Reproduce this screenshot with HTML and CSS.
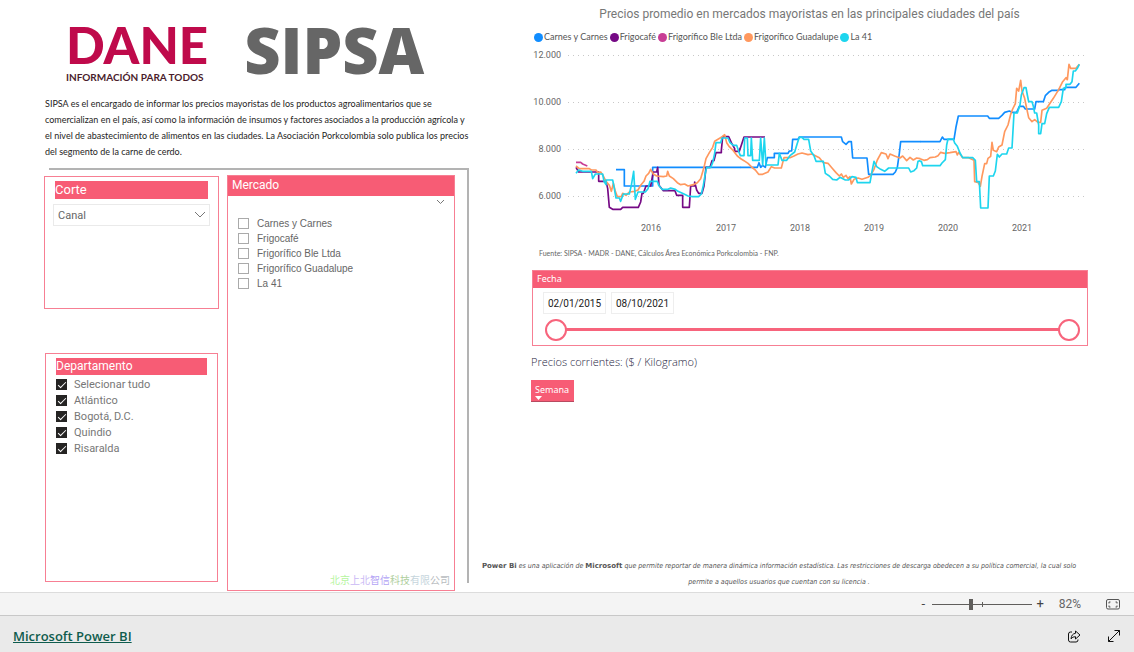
FILE: index.html
```html
<!DOCTYPE html>
<html lang="es">
<head>
<meta charset="utf-8">
<title>Microsoft Power BI</title>
<link rel="stylesheet" href="styles.css">
</head>
<body>
<main class="report">
  <section class="left">
    <header class="intro">
      <div class="logos">
        <div class="dane"><span class="dane-name">DANE</span><span class="dane-tag">INFORMACIÓN PARA TODOS</span></div>
        <div class="sipsa">SIPSA</div>
      </div>
      <p class="about">SIPSA es el encargado de informar los precios mayoristas de los productos agroalimentarios que se comercializan en el país, así como la información de insumos y factores asociados a la producción agrícola y el nivel de abastecimiento de alimentos en las ciudades. La Asociación Porkcolombia solo publica los precios del segmento de la carne de cerdo.</p>
    </header>
    <div class="filters">
      <div class="stack">
        <section class="panel corte">
          <h2 class="panel-head"><label for="corte">Corte</label></h2>
          <div class="select-wrap">
            <select id="corte" class="select"><option>Canal</option></select>
            <svg class="select-arrow" viewBox="0 0 12 7" width="12" height="7"><path d="M1 1l5 5 5-5"/></svg>
          </div>
        </section>
        <section class="panel departamento">
          <h2 class="panel-head">Departamento</h2>
          <label class="check dark"><input type="checkbox" checked>Selecionar tudo</label>
          <label class="check dark"><input type="checkbox" checked>Atlántico</label>
          <label class="check dark"><input type="checkbox" checked>Bogotá, D.C.</label>
          <label class="check dark"><input type="checkbox" checked>Quindio</label>
          <label class="check dark"><input type="checkbox" checked>Risaralda</label>
        </section>
      </div>
      <section class="panel mercado">
        <h2 class="mercado-head">Mercado</h2>
        <button class="more" aria-label="Opciones"><svg viewBox="0 0 9 6" width="9" height="6"><path d="M1 1l3.500 3.500L8 1"/></svg></button>
        <label class="check light"><input type="checkbox">Carnes y Carnes</label>
        <label class="check light"><input type="checkbox">Frigocafé</label>
        <label class="check light"><input type="checkbox">Frigorífico Ble Ltda</label>
        <label class="check light"><input type="checkbox">Frigorífico Guadalupe</label>
        <label class="check light"><input type="checkbox">La 41</label>
        <p class="vendor"><span class="v1">北京</span><span class="v2">上北</span><span class="v3">智信</span><span class="v4">科技</span><span class="v5">有限</span><span class="v6">公司</span></p>
      </section>
    </div>
  </section>

  <section class="right">
    <h1 class="chart-title">Precios promedio en mercados mayoristas en las principales ciudades del país</h1>
    <ul class="legend">
      <li><i class="dot c-blue"></i>Carnes y Carnes</li>
      <li><i class="dot c-purple"></i>Frigocafé</li>
      <li><i class="dot c-pink"></i>Frigorífico Ble Ltda</li>
      <li><i class="dot c-orange"></i>Frigorífico Guadalupe</li>
      <li><i class="dot c-cyan"></i>La 41</li>
    </ul>
    <svg class="chart" viewBox="531 46 557 190" role="img" aria-label="Precios por mercado, 2015 a 2021">
      <g class="grid"><path d="M568 55.500H1088M568 102.500H1088M568 149.500H1088M568 196.500H1088"/></g>
      <g class="axis y"><text x="561" y="58">12.000</text><text x="561" y="105">10.000</text><text x="561" y="152">8.000</text><text x="561" y="199">6.000</text></g>
      <g class="axis x"><text x="651" y="231">2016</text><text x="726" y="231">2017</text><text x="800" y="231">2018</text><text x="874" y="231">2019</text><text x="948" y="231">2020</text><text x="1022" y="231">2021</text></g>
      <g class="lines" transform="translate(560 120) scale(.33333)">
        <path class="s-blue" d="M168 149H193V198H278V142H541"/>
        <path class="s-purple" d="M48 142L56 156H116V184H138L143 205 148 262 158 268H182L188 262H235L242 246 246 220H250L258 198H272L280 156H290L293 142 297 196 310 212H345L350 226H368V262H388L392 198H404V186L410 210 416 220H426L432 198 438 142H450L456 122H462L468 98H484V92L488 50H506L514 68 524 86V94H538L541 84"/>
        <path class="s-pink" d="M48 127H62L68 132 82 138"/>
        <path class="s-orange" d="M48 138L58 146H88L94 150H108L114 158 122 156 130 168 138 184 148 196 154 214 160 190 166 214 172 230H184L188 220 198 226 208 216 224 214 234 210 242 196 252 184 258 168 266 160 272 148 280 162 290 168 310 170 320 168 323 154 328 168 340 176 352 188 362 194 374 192 384 198 400 194 412 188 422 176 432 142 438 116 448 98 458 82 464 64 474 58 484 52 494 44 500 68 508 80 520 92 532 108 541 115"/>
        <path class="s-cyan" d="M48 160L56 150 68 154H94L98 176 106 162H128L132 184 138 194V180H158L162 200 168 234H178L182 244 190 222H208L214 196 221 154 226 238 234 216H256L264 206 270 184H292L296 196 306 208H324L332 204 346 208 354 214 372 222 384 228 398 230H416L424 222 430 196 436 160 440 142H452L458 128 464 100 468 68H482L486 54H504L510 68 520 76H530L536 94 541 107"/>
      </g>
      <g class="lines" transform="translate(740 50) scale(.33333)">
        <path class="s-blue" d="M0 352H52L57 338 62 352 68 346 76 352 82 323H103V310H144L148 303H155L158 268H174L178 261H304L308 275 318 283 326 275H334L338 324H381L386 373H459L466 366 472 352 478 310 482 275H541"/>
        <path class="s-purple" d="M0 298L12 261H75"/>
        <path class="s-orange" d="M0 325L12 332 24 340 36 352 46 360 56 373H68L84 366 94 350 104 354H124L132 323H150L162 318 174 312 186 309 204 314 216 312 226 317 238 323 250 338 264 340 276 354 288 368 298 378 304 372 310 382 318 376 324 386 330 380 334 402 342 388 354 384 366 388 384 382 392 376 402 358 412 330 424 308 438 312 444 326 450 312 464 318 480 324 488 318 500 332 510 322 520 330 530 324 541 326"/>
        <path class="s-cyan" d="M0 317H12L14 264H22L24 317H32L34 264 38 331H58L62 264 68 345 73 264 78 345H114L118 310 126 331H140L150 317 164 306 172 280 178 262H186L192 268H206L212 303 222 317 228 334H250L256 370 268 378 278 388 290 390 300 382 316 390H326L336 380 348 382 352 398H390L396 364 402 334 410 350 422 358 434 364 446 354H506L512 366 522 362 530 354 534 334 541 332"/>
      </g>
      <g class="lines" transform="translate(910 45) scale(.33333)">
        <path class="s-blue" d="M30 290H90L97 276 102 283H132L138 246 145 213H233L238 220H266L276 211 284 202 298 198 306 202H320L328 184H340L346 192H374L378 170H400L406 152 416 142 426 136H446V134H464L466 127H498L508 115"/>
        <path class="s-orange" d="M30 341L42 346 52 344 60 338 76 336 84 332 92 322 104 325 120 323 138 320 142 330 146 322 158 338 176 338 192 346 194 410 204 412 211 424 216 394 224 356H230L234 340 242 334 246 292 250 316 260 320 266 306 276 300 284 260 294 240 302 208 308 192 316 176 320 130 326 138 332 106 336 138 344 160 350 190 356 218 366 230 374 224 384 232H392L396 196 410 190 430 160 446 134 458 110 468 98 472 104 477 58 482 70H498L508 58"/>
        <path class="s-cyan" d="M30 349H34L38 362H90L96 354 106 344 110 300 114 282H130L134 294 142 304 150 324 158 338H188L196 346 200 410H208L212 489H234L238 393H250L256 378 262 328 268 336 276 327H290L296 309H306L312 204H322L330 180 334 150 342 128H348L352 150 356 170H366L370 184 374 204H380L386 240V266H392L396 236H404L410 206 418 187H446L454 170 460 130 468 128V118H480L486 110 490 78H496L502 70 508 58"/>
      </g>
    </svg>
    <p class="source">Fuente: SIPSA - MADR - DANE, Cálculos Área Económica Porkcolombia - FNP.</p>
    <section class="fecha">
      <h2 class="fecha-head">Fecha</h2>
      <div class="dates">
        <input class="date" type="text" value="02/01/2015" aria-label="Desde">
        <input class="date" type="text" value="08/10/2021" aria-label="Hasta">
      </div>
      <div class="range">
        <input type="range" min="0" max="100" value="0" aria-label="Inicio">
        <input type="range" min="0" max="100" value="100" aria-label="Fin">
      </div>
    </section>
    <h2 class="prices">Precios corrientes: ($ / Kilogramo)</h2>
    <table class="table"><thead><tr><th><button class="sort">Semana<svg viewBox="0 0 7 4" width="7" height="4"><path d="M0 0h7L3.500 4z"/></svg></button></th></tr></thead></table>
    <p class="note"><b>Power Bi</b> es una aplicación de <b>Microsoft</b> que permite reportar de manera dinámica información estadística. Las restricciones de descarga obedecen a su política comercial, la cual solo permite a aquellos usuarios que cuentan con su licencia .</p>
  </section>
</main>
<div class="zoombar">
  <button class="zoom-btn">-</button>
  <div class="zoom-range"><i class="tick"></i><input type="range" min="0" max="100" value="39" aria-label="Zoom"></div>
  <button class="zoom-btn">+</button>
  <span class="percent">82%</span>
  <button class="icon-btn" aria-label="Ajustar a la página"><svg class="fit" viewBox="0 0 15 11" width="15" height="11"><rect x=".5" y=".5" width="13" height="9.500" rx="1.500"/><path d="M3 4.500V3h1.500M3 6.500V8h1.500M11 4.500V3H9.500M11 6.500V8H9.500"/></svg></button>
</div>
<footer class="bottom">
  <a class="brand" href="#">Microsoft Power BI</a>
  <button class="icon-btn" aria-label="Compartir"><svg class="ico" viewBox="0 0 14 13" width="14" height="13"><path d="M5 2H3.500Q1.500 2 1.500 4v6q0 2 2 2h5.500q2 0 2-2V9.500M8.500 1l4.500 4-4.500 4V6.700Q5.500 6.500 4 8.800 4.500 3.800 8.500 3.300z"/></svg></button>
  <button class="icon-btn" aria-label="Pantalla completa"><svg class="ico" viewBox="0 0 14 14" width="14" height="14"><path d="M1.500 12.500l11-11M7.500 1.500h5v5M1.500 7.500v5h5"/></svg></button>
</footer>
</body>
</html>
```
FILE: styles.css
```css
* { box-sizing: border-box; }
body { margin: 0; min-height: 100vh; display: flex; flex-direction: column; background: #fff; font-family: Roboto, "Noto Sans", sans-serif; color: #666; }
h1, h2, p, ul { margin: 0; padding: 0; font-weight: 400; }
button { border: 0; padding: 0; background: none; font: inherit; color: inherit; }
svg { display: block; }

.report { flex: 1; display: grid; grid-template-columns: 470fr 664fr; }
.left { display: flex; flex-direction: column; padding-left: 44px; }
.intro { height: 168px; padding-top: 16px; }
.logos { display: flex; gap: 36px; height: 80px; padding-left: 22px; }
.dane { display: flex; flex-direction: column; padding-top: 2px; }
.dane-name { font: 900 51px/54px Lato, sans-serif; color: #bf0a4b; }
.dane-tag { font: 700 10px/10px Lato, sans-serif; color: #4a1c2c; white-space: nowrap; }
.sipsa { font: 800 63px/68px "Open Sans", sans-serif; color: #666; }
.about { padding-left: 1px; font: 9px/16px Lato, sans-serif; color: #252423; }

.filters { flex: 1; display: grid; grid-template-columns: 175fr 228fr; gap: 8px; margin-right: 1px; padding: 7px 14px 1px 0; position: relative; }
.filters::before { content: ""; position: absolute; left: 5px; right: 0; top: 0; bottom: 9px; border-top: 2px solid #b3b3b3; border-right: 2px solid #b3b3b3; pointer-events: none; }
.stack { display: flex; flex-direction: column; gap: 44px; padding: 1px 0 9px; }
.panel { border: 1px solid #f77f93; background: #fff; position: relative; }
.corte { height: 133px; padding: 4px 8px; }
.departamento { flex: 1; margin: 0 1px; padding: 4px 10px; }
.panel-head { margin: 0 2px; background: #f75c75; color: #fff; font-size: 13px; line-height: 18px; }
.departamento .panel-head { margin: 0 0 1px; font-size: 12px; line-height: 17px; }
.select-wrap { position: relative; margin-top: 5px; }
.select { appearance: none; display: block; width: 100%; height: 22px; padding: 0 4px; border: 1px solid #eaeaea; border-radius: 0; background: #fff; color: #666; font: 11px Roboto, sans-serif; }
.select-arrow { position: absolute; right: 4px; top: 7px; fill: none; stroke: #777; }
.check { display: flex; align-items: center; }
.check input { appearance: none; flex: none; width: 11px; height: 11px; margin: 0; }
.dark { height: 16px; gap: 7px; font-size: 11px; color: #777; }
.dark input { background: #252423; }
.dark input::before { content: ""; display: block; width: 7px; height: 3px; margin: 3px 2px; border-left: 1px solid #fff; border-bottom: 1px solid #fff; transform: rotate(-45deg); }
.light { height: 15px; gap: 8px; padding-left: 10px; font: 10px "Liberation Sans", sans-serif; color: #666; }
.light input { border: 1px solid #aaa; }
.mercado { display: flex; flex-direction: column; }
.mercado-head { height: 20px; padding-left: 4px; background: #f75c75; color: #fff; font-size: 12px; line-height: 18px; }
.more { align-self: flex-end; height: 11px; margin: 0 9px 9px; }
.more path { fill: none; stroke: #777; }
.vendor { margin: auto 4px 4px; text-align: right; font: 10px/12px "Noto Sans CJK SC", sans-serif; }
.v1 { color: #b5f5a0; } .v2 { color: #c9b8f5; } .v3 { color: #b3a4f5; } .v4 { color: #b0cfa0; } .v5 { color: #c5d5dc; } .v6 { color: #b8bcc0; }

.right { display: flex; flex-direction: column; padding: 5px 46px 2px 61px; }
.chart-title { text-align: center; font-size: 12px; line-height: 18px; color: #777; }
.legend { display: flex; gap: 2px; margin: 7px 0 2px 3px; list-style: none; font: 9px/14px Lato, sans-serif; color: #555; white-space: nowrap; }
.legend li { display: flex; align-items: center; gap: 1px; }
.dot { width: 9px; height: 9px; border-radius: 50%; }
.c-blue { background: #118dff; } .c-purple { background: #750985; } .c-pink { background: #c83d95; } .c-orange { background: #ff985e; } .c-cyan { background: #1dd5ee; }
.chart { width: 100%; height: auto; }
.grid { stroke: #c8c8c8; stroke-dasharray: 1 4; }
.axis { font-size: 9px; fill: #666; }
.y { text-anchor: end; } .x { text-anchor: middle; }
.lines { fill: none; stroke-width: 5; stroke-linejoin: round; }
.s-blue { stroke: #118dff; } .s-purple { stroke: #750985; } .s-pink { stroke: #c83d95; } .s-orange { stroke: #ff985e; } .s-cyan { stroke: #1dd5ee; }
.source { margin: 11px 8px; font: 7px/12px Lato, sans-serif; color: #666; white-space: nowrap; }
.fecha { margin-left: 1px; border: 1px solid #f77f93; }
.fecha-head { height: 17px; padding-left: 4px; background: #f75c75; color: #fff; font: 9px/16px "Noto Sans", sans-serif; }
.dates { display: flex; gap: 5px; padding: 4px 10px 5px; }
.date { width: 63px; height: 22px; border: 1px solid #eee; padding: 0; text-align: center; color: #222; font: 10px Roboto, sans-serif; }
.range { position: relative; height: 26px; margin: 0 7px 0 12px; }
.range::before { content: ""; position: absolute; left: 20px; right: 20px; top: 9px; height: 3px; background: #f7647c; }
.range input { appearance: none; position: absolute; left: 0; top: 0; width: 100%; height: 22px; margin: 0; background: none; pointer-events: none; }
.range input::-webkit-slider-thumb { appearance: none; width: 22px; height: 22px; border: 2px solid #f7647c; border-radius: 50%; background: #fff; pointer-events: auto; }
.prices { margin-top: 7px; font: 300 11px/17px "Open Sans", sans-serif; color: #252440; }
.table { margin-top: 10px; border-collapse: collapse; align-self: flex-start; }
.table th { padding: 0; background: #f75c75; border-bottom: 1px solid #b84a60; font-weight: 400; }
.sort { display: block; height: 21px; padding: 2px 5px 0 4px; color: #fff; font: 9px/13px "Noto Sans", sans-serif; text-align: left; }
.sort path { fill: #fff; }
.note { margin: auto -46px 0 -61px; padding: 0 46px 0 0; text-align: center; font: italic 7px/16px "DejaVu Sans Condensed", sans-serif; color: #555; }
.note b { font-family: "DejaVu Sans", sans-serif; font-style: normal; }

.zoombar { height: 24px; display: flex; align-items: center; padding: 0 13px; background: #f4f4f4; border-top: 1px solid #dcdcdc; border-bottom: 1px solid #c8c8c8; justify-content: flex-end; font-size: 12px; color: #666; }
.zoom-btn { width: 17px; line-height: 20px; font-size: 13px; color: #444; }
.zoom-range { position: relative; width: 100px; height: 12px; }
.zoom-range::before { content: ""; position: absolute; left: 0; right: 0; top: 6px; height: 1px; background: #605e5c; }
.tick { position: absolute; left: 50px; top: 4px; width: 1px; height: 5px; background: #605e5c; }
.zoom-range input { appearance: none; position: absolute; left: 0; top: 0; width: 100%; height: 12px; margin: 0; background: none; }
.zoom-range input::-webkit-slider-thumb { appearance: none; width: 4px; height: 11px; background: #605e5c; }
.percent { margin: 0 25px 0 10px; }
.fit { fill: none; stroke: #555; }
.bottom { height: 36px; display: flex; align-items: center; padding: 4px 13px 0; background: #eaeaea; }
.brand { margin-right: auto; color: #0f5c4d; font: 600 13px "Open Sans", sans-serif; }
.bottom .icon-btn { margin-left: 26px; }
.ico { fill: none; stroke: #111; stroke-width: 1; }
```
